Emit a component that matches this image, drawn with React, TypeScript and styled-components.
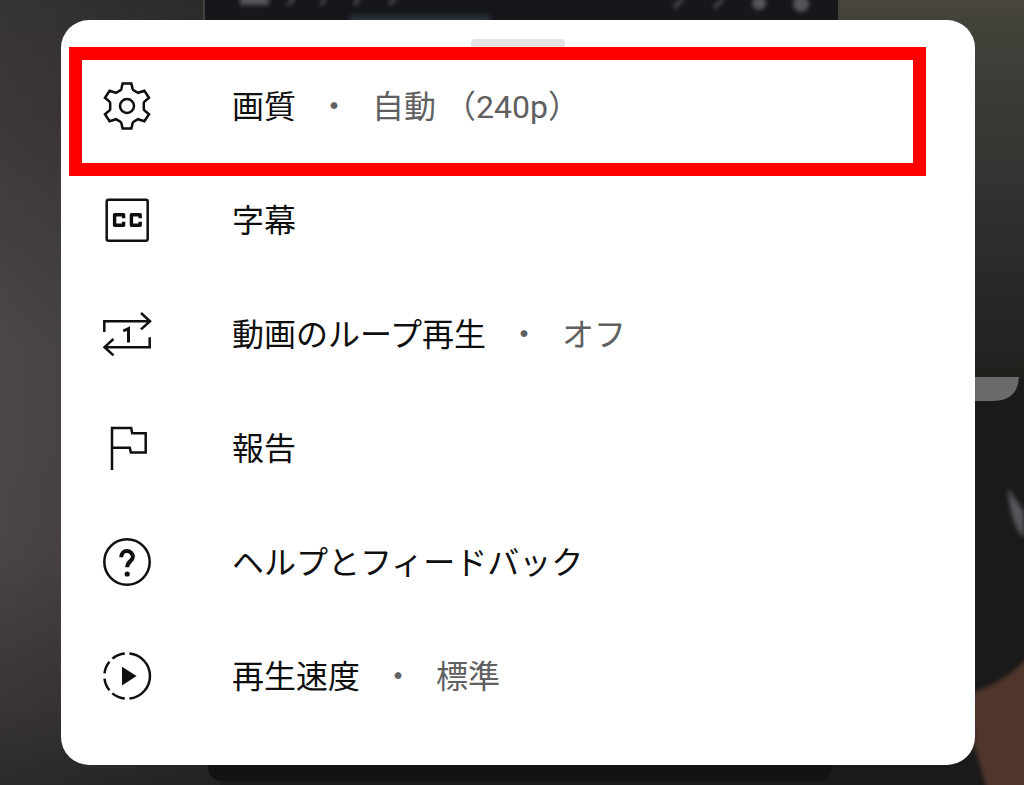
import React from 'react';
import styled, { createGlobalStyle } from 'styled-components';

const GlobalStyle = createGlobalStyle`
  * { box-sizing: border-box; }
  body {
    margin: 0;
    background: #1b1b1c;
    font-family: Roboto, 'Noto Sans CJK JP', sans-serif;
  }
`;

const Page = styled.main`
  position: relative;
  min-height: 100vh;
  padding: 20px 49px 20px 61px;
  overflow: hidden;
`;

const Backdrop = styled.svg`
  position: absolute;
  inset: 0;
  width: 100%;
  height: 100%;
`;

const Sheet = styled.section`
  position: relative;
  display: flex;
  flex-direction: column;
  padding-bottom: 32px;
  border-radius: 28px;
  background: #fff;
`;

const Handle = styled.div`
  align-self: center;
  width: 94px;
  height: 10px;
  margin-top: 19px;
  border-radius: 4px;
  background: #e3e3e3;
`;

const Menu = styled.ul`
  margin: 0;
  padding: 0;
  list-style: none;
`;

const Item = styled.li`
  position: relative;
`;

const Row = styled.button`
  display: flex;
  align-items: center;
  gap: 80px;
  width: 100%;
  height: 114px;
  padding: 0 41px;
  border: 0;
  background: none;
  color: #0f0f0f;
  font: inherit;
  font-size: 32px;
  line-height: 48px;
  text-align: left;
  cursor: pointer;
`;

const Icon = styled.svg`
  flex: none;
  width: 50px;
  height: 50px;
  fill: none;
  stroke: #0f0f0f;
  stroke-width: 2.5;
`;

const Label = styled.span`
  display: flex;
  gap: 22px;
  padding-top: 2px;
  white-space: nowrap;
`;

const Muted = styled.span`
  color: #606060;
`;

const Highlight = styled.div`
  position: absolute;
  inset: -2px 49px -13px 8px;
  border: 13px solid #fe0000;
  pointer-events: none;
`;

const GearIcon = () => (
  <Icon viewBox="-25 -25 50 50" aria-hidden="true">
    <path d="M-4.4-22.6H4.4L5.6-17.2Q6-16 6.8-15.6L11-13.2 17.4-15.3 22-8.2 17.6-4.6Q16.8-4 16.8-3V3Q16.8 4 17.6 4.6L22 8.2 17.4 15.3 11 13.2 6.8 15.6Q6 16 5.6 17.2L4.4 22.6H-4.4L-5.6 17.2Q-6 16-6.8 15.6L-11 13.2-17.4 15.3-22 8.2-17.6 4.6Q-16.8 4-16.8 3V-3Q-16.8-4-17.6-4.6L-22-8.2-17.4-15.3-11-13.2-6.8-15.6Q-6-16-5.6-17.2Z" />
    <circle r="7" />
  </Icon>
);

const CaptionsIcon = () => (
  <Icon viewBox="-25 -25 50 50" aria-hidden="true">
    <rect x="-20.3" y="-20.3" width="41" height="41" rx="2" />
    <path
      strokeWidth="3.4"
      strokeLinejoin="round"
      d="M-3.4-1.8V-5.2H-12.4V5.2H-3.4V1.8M13.2-1.8V-5.2H4.4V5.2H13.2V1.8"
    />
  </Icon>
);

const LoopIcon = () => (
  <Icon viewBox="-25 -25 50 50" aria-hidden="true">
    <path d="M-22.7-2V-12.7H22.5M14-21L23-12.7 14-4.6M22.7 3.3V13.2H-22M-13.5 5L-22.5 13.2-13.5 21.4" />
    <path strokeWidth="3" d="M-3.8-3L1.5-5.4V8.4" />
  </Icon>
);

const FlagIcon = () => (
  <Icon viewBox="-25 -25 50 50" aria-hidden="true">
    <path d="M-15 22V-20H4.2L5.2-14.8H18.7V4.6H3.8L2.8-.2H-15" />
  </Icon>
);

const HelpIcon = () => (
  <Icon viewBox="-25 -25 50 50" aria-hidden="true">
    <circle r="22.7" />
    <path
      strokeWidth="4"
      d="M-5.7-4.8C-5.7-8.6-3.2-10.9 0-10.9S5.9-8.6 5.9-5.2C5.9-1.2.2-.4.2 5.2"
    />
    <circle cx=".2" cy="12" r="2.6" fill="#0f0f0f" stroke="none" />
  </Icon>
);

const SpeedIcon = () => (
  <Icon viewBox="-25 -25 50 50" aria-hidden="true">
    <path d="M2.4-22.6A22.7 22.7 0 0 1 2.4 22.6M-2.2-22.6A22.7 22.7 0 0 0-14.6-17.4M-17.6-14.3A22.7 22.7 0 0 0-22.5-2.6M-22.5 2.6A22.7 22.7 0 0 0-17.6 14.3M-14.6 17.4A22.7 22.7 0 0 0-2.2 22.6" />
    <path fill="#0f0f0f" stroke="none" d="M-5-9.3V9.5L9.6 0Z" />
  </Icon>
);

type MenuEntry = {
  icon: React.FC;
  label: string;
  value?: string;
  highlighted?: boolean;
};

const entries: MenuEntry[] = [
  { icon: GearIcon, label: '画質', value: '自動 （240p）', highlighted: true },
  { icon: CaptionsIcon, label: '字幕' },
  { icon: LoopIcon, label: '動画のループ再生', value: 'オフ' },
  { icon: FlagIcon, label: '報告' },
  { icon: HelpIcon, label: 'ヘルプとフィードバック' },
  { icon: SpeedIcon, label: '再生速度', value: '標準' },
];

/* Dimmed video frame that shows around the edges of the sheet. */
const VideoBackdrop = () => (
  <Backdrop viewBox="0 0 1024 785" preserveAspectRatio="none" aria-hidden="true">
    <defs>
      <linearGradient id="wall" x1="0" y1="0" x2="0" y2="1">
        <stop offset="0" stopColor="#353432" />
        <stop offset=".15" stopColor="#3d3837" />
        <stop offset=".45" stopColor="#4b4748" />
        <stop offset=".7" stopColor="#4b4445" />
        <stop offset=".9" stopColor="#393534" />
        <stop offset="1" stopColor="#2b2a2c" />
      </linearGradient>
      <linearGradient id="shade" x1="0" y1="0" x2="1" y2="0">
        <stop offset="0" stopColor="#000" stopOpacity="0" />
        <stop offset="1" stopColor="#000" stopOpacity=".2" />
      </linearGradient>
      <linearGradient id="room" x1="0" y1="0" x2="0" y2="1">
        <stop offset="0" stopColor="#4c443f" />
        <stop offset=".04" stopColor="#42433b" />
        <stop offset=".3" stopColor="#3a3935" />
        <stop offset=".6" stopColor="#2e2e2d" />
        <stop offset="1" stopColor="#20201d" />
      </linearGradient>
      <filter id="soft" x="-20%" y="-20%" width="140%" height="140%">
        <feGaussianBlur stdDeviation="2" />
      </filter>
    </defs>
    <rect width="220" height="785" fill="url(#wall)" />
    <rect width="220" height="785" fill="url(#shade)" />
    <rect x="838" width="186" height="378" fill="url(#room)" />
    <rect x="838" y="378" width="186" height="407" fill="#1b1a1a" />
    <rect x="205" y="0" width="633" height="30" fill="#15171b" />
    <path d="M204 0V30M839 0V30" stroke="#41423e" strokeWidth="2" />
    <rect x="208" y="750" width="624" height="31" rx="14" fill="#131316" />
    <g filter="url(#soft)" fill="#55565a">
      <rect x="240" y="-4" width="29" height="9" />
      <path d="M288 5l7-8M321 5l5-8M355 5l4-8M389 4l7-6M674 8l9-10M714 8l10-10" stroke="#55565a" strokeWidth="3" />
      <circle cx="759" cy="3" r="7" />
      <circle cx="801" cy="4" r="8" />
      <rect x="350" y="15" width="140" height="12" fill="#2c2e3a" />
      <path d="M1008 488L1024 512V538Q1010 524 1008 488Z" />
      <path d="M972 692Q1000 686 1030 656V800H990L974 744Z" fill="#50352a" />
    </g>
    <path d="M970 377H1019Q1018 401 992 401H970Z" fill="#6b6a6a" />
  </Backdrop>
);

export default function App() {
  return (
    <>
      <GlobalStyle />
      <Page>
        <VideoBackdrop />
        <Sheet>
          <Handle />
          <Menu>
            {entries.map(({ icon: EntryIcon, label, value, highlighted }) => (
              <Item key={label}>
                <Row type="button">
                  <EntryIcon />
                  <Label>
                    {label}
                    {value && (
                      <>
                        <Muted>・</Muted>
                        <Muted>{value}</Muted>
                      </>
                    )}
                  </Label>
                </Row>
                {highlighted && <Highlight />}
              </Item>
            ))}
          </Menu>
        </Sheet>
      </Page>
    </>
  );
}
